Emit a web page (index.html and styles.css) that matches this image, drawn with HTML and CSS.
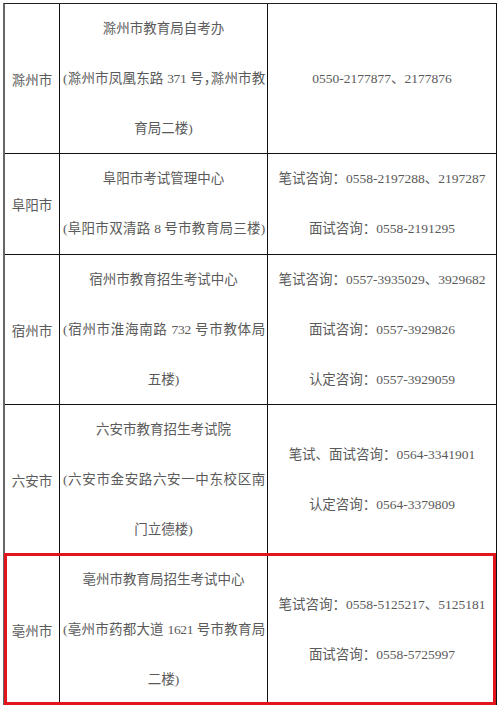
FILE: index.html
```html
<!DOCTYPE html>
<html lang="zh-CN">
<head>
<meta charset="utf-8">
<title>考试机构联系方式</title>
<link rel="stylesheet" href="styles.css">
</head>
<body>
<div class="sheet">
  <div class="row tall">
    <div class="cell city">滁州市</div>
    <div class="cell office">
      <span class="ln">滁州市教育局自考办</span>
      <span class="ln just">(滁州市凤凰东路 371 号，滁州市教</span>
      <span class="ln">育局二楼)</span>
    </div>
    <div class="cell phone">
      <span class="ln">0550-2177877、2177876</span>
    </div>
  </div>
  <div class="row short">
    <div class="cell city">阜阳市</div>
    <div class="cell office">
      <span class="ln">阜阳市考试管理中心</span>
      <span class="ln just">(阜阳市双清路 8 号市教育局三楼)</span>
    </div>
    <div class="cell phone">
      <span class="ln">笔试咨询：0558-2197288、2197287</span>
      <span class="ln">面试咨询：0558-2191295</span>
    </div>
  </div>
  <div class="row tall">
    <div class="cell city">宿州市</div>
    <div class="cell office">
      <span class="ln">宿州市教育招生考试中心</span>
      <span class="ln just">(宿州市淮海南路 732 号市教体局</span>
      <span class="ln">五楼)</span>
    </div>
    <div class="cell phone">
      <span class="ln">笔试咨询：0557-3935029、3929682</span>
      <span class="ln">面试咨询：0557-3929826</span>
      <span class="ln">认定咨询：0557-3929059</span>
    </div>
  </div>
  <div class="row tall">
    <div class="cell city">六安市</div>
    <div class="cell office">
      <span class="ln">六安市教育招生考试院</span>
      <span class="ln just">(六安市金安路六安一中东校区南</span>
      <span class="ln">门立德楼)</span>
    </div>
    <div class="cell phone">
      <span class="ln">笔试、面试咨询：0564-3341901</span>
      <span class="ln">认定咨询：0564-3379809</span>
    </div>
  </div>
  <div class="row tall marked">
    <div class="cell city">亳州市</div>
    <div class="cell office">
      <span class="ln">亳州市教育局招生考试中心</span>
      <span class="ln just">(亳州市药都大道 1621 号市教育局</span>
      <span class="ln">二楼)</span>
    </div>
    <div class="cell phone">
      <span class="ln">笔试咨询：0558-5125217、5125181</span>
      <span class="ln">面试咨询：0558-5725997</span>
    </div>
  </div>
</div>
</body>
</html>
```
FILE: styles.css
```css
html, body {
  margin: 0;
  padding: 0;
  background: #ffffff;
}

body {
  font-family: "Liberation Serif", "Noto Sans CJK SC", serif;
  font-size: 13.5px;
  color: #5a5a5a;
}

.sheet {
  box-sizing: border-box;
  width: 494px;
  margin: 3px 0 0 3px;
  border-top: 1px solid #222;
  border-left: 2px solid #666;
  border-right: 1px solid #111;
}

.row {
  box-sizing: border-box;
  display: grid;
  grid-template-columns: 55px 208px 1fr;
  border-bottom: 1px solid #111;
}

.row.tall {
  height: 150px;
}

.row.short {
  height: 101px;
}

.cell {
  box-sizing: border-box;
  display: flex;
  flex-direction: column;
  justify-content: center;
  align-items: center;
  min-width: 0;
}

.city,
.office {
  border-right: 1px solid #111;
}

.ln {
  display: block;
  line-height: 50px;
  white-space: nowrap;
  text-align: center;
}

.office {
  font-feature-settings: "halt" 1;
}

.office .just {
  box-sizing: border-box;
  width: 100%;
  padding: 0 2px 0 3px;
  letter-spacing: -0.3px;
  text-align: justify;
  text-align-last: justify;
}

.marked {
  position: relative;
}

.marked::after {
  content: "";
  position: absolute;
  top: -2px;
  left: -1px;
  right: 0;
  bottom: -1px;
  border: 3px solid #e2141c;
  pointer-events: none;
}
```
